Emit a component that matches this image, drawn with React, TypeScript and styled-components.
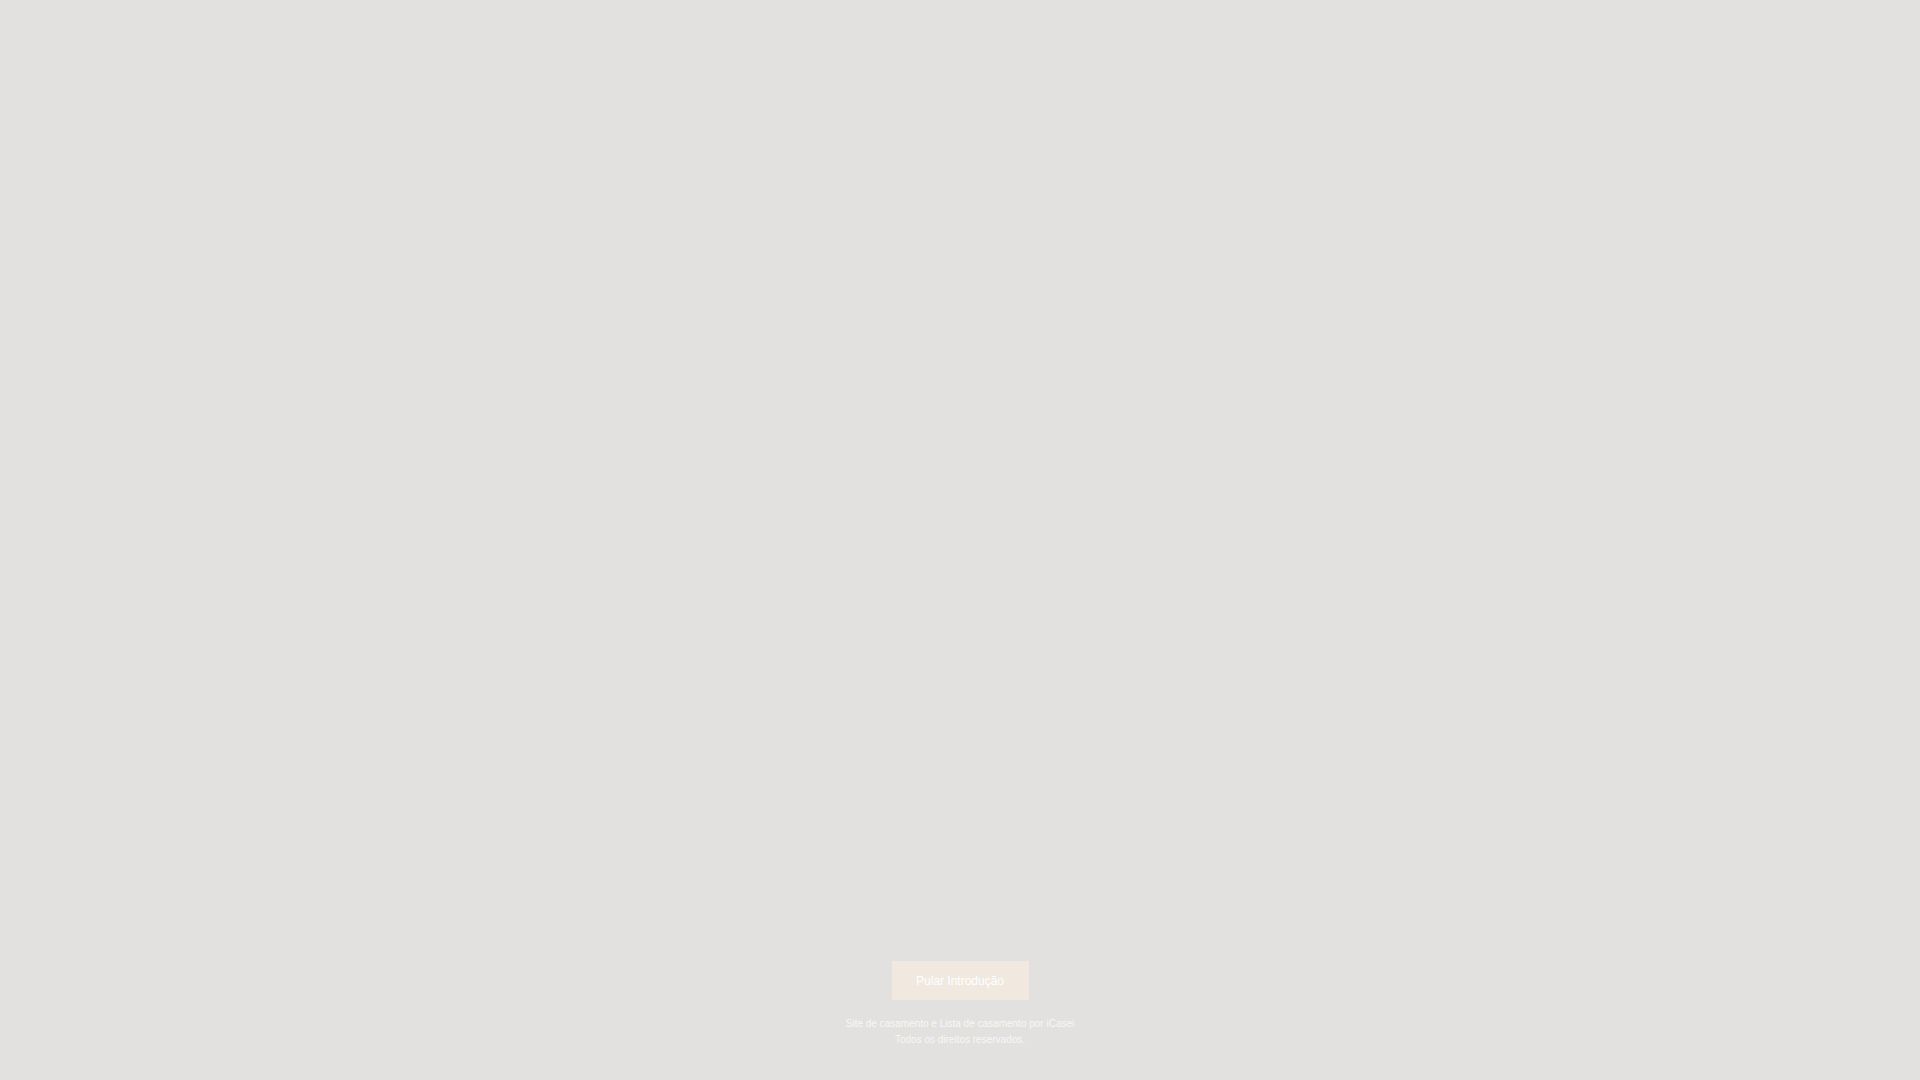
import React from 'react'
import styled, { createGlobalStyle } from 'styled-components'

const GlobalStyle = createGlobalStyle`
  html, body {
    margin: 0;
    padding: 0;
    background: #e2e1df;
    font-family: 'Liberation Sans', Arial, sans-serif;
  }
`

const Page = styled.div`
  height: 100vh;
  display: flex;
  flex-direction: column;
  align-items: center;
  justify-content: flex-end;
  background: #e2e1df;
  padding-bottom: 32px;
  box-sizing: border-box;
`

const SkipButton = styled.button`
  width: 137px;
  height: 39px;
  border: none;
  background: #f1e8df;
  color: #ffffff;
  font-family: 'Liberation Sans', Arial, sans-serif;
  font-size: 12px;
  cursor: pointer;
  padding: 0;
`

const Footer = styled.footer`
  margin-top: 16px;
  text-align: center;
  color: #f8f7f5;
  font-size: 10px;
  line-height: 16px;
`

export default function App() {
  return (
    <>
      <GlobalStyle />
      <Page>
        <SkipButton>Pular Introdução</SkipButton>
        <Footer>
          Site de casamento e Lista de casamento por iCasei
          <br />
          Todos os direitos reservados.
        </Footer>
      </Page>
    </>
  )
}
